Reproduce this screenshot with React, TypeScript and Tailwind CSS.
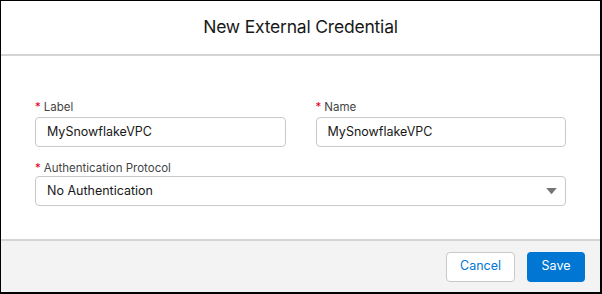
import React from "react";

function Field({ label, value }: { label: string; value: string }) {
  return (
    <div className="flex flex-col">
      <label className="text-[11.5px] leading-[16px] text-[#444444] mb-[2px]">
        <abbr className="text-[#ea001e] no-underline mr-[3px]">*</abbr>
        {label}
      </label>
      <div className="h-[30px] border border-[#c9c9c9] rounded-[4px] px-[11px] flex items-center text-[12.5px] text-[#181818]">
        {value}
      </div>
    </div>
  );
}

export default function App() {
  return (
    <div
      className="w-[602px] h-[294px] bg-white border border-black border-r-2 border-b-2 flex flex-col overflow-hidden"
      style={{ fontFamily: "Inter, 'Liberation Sans', sans-serif" }}
    >
      {/* Header */}
      <div className="h-[55px] shrink-0 flex items-center justify-center border-b-2 border-[#d4d4d4]">
        <h2 className="text-[17.5px] text-[#181818] tracking-[-0.2px]">New External Credential</h2>
      </div>

      {/* Body */}
      <div className="flex-1 px-[34px] pt-[43px]">
        <div className="grid grid-cols-2 gap-x-[30px]">
          <Field label="Label" value="MySnowflakeVPC" />
          <Field label="Name" value="MySnowflakeVPC" />
        </div>
        <div className="mt-[13px] flex flex-col">
          <label className="text-[11.5px] leading-[16px] text-[#444444]">
            <abbr className="text-[#ea001e] no-underline mr-[3px]">*</abbr>
            Authentication Protocol
          </label>
          <div className="h-[30px] border border-[#c9c9c9] rounded-[4px] pl-[11px] pr-[8px] flex items-center justify-between text-[12.5px] text-[#181818]">
            <span>No Authentication</span>
            <svg width="11" height="7" viewBox="0 0 12 8">
              <path d="M0 0 L12 0 L6 7 Z" fill="#747474" />
            </svg>
          </div>
        </div>
      </div>

      {/* Footer */}
      <div className="h-[53px] shrink-0 bg-[#f3f3f3] border-t-2 border-[#d4d4d4] flex items-center justify-end gap-[12px] pr-[15px]">
        <button className="h-[30px] w-[69px] rounded-[4px] border border-[#c9c9c9] bg-white text-[#0176d3] text-[12.5px]">
          Cancel
        </button>
        <button className="h-[30px] w-[58px] rounded-[4px] bg-[#0176d3] text-white text-[12.5px]">
          Save
        </button>
      </div>
    </div>
  );
}
